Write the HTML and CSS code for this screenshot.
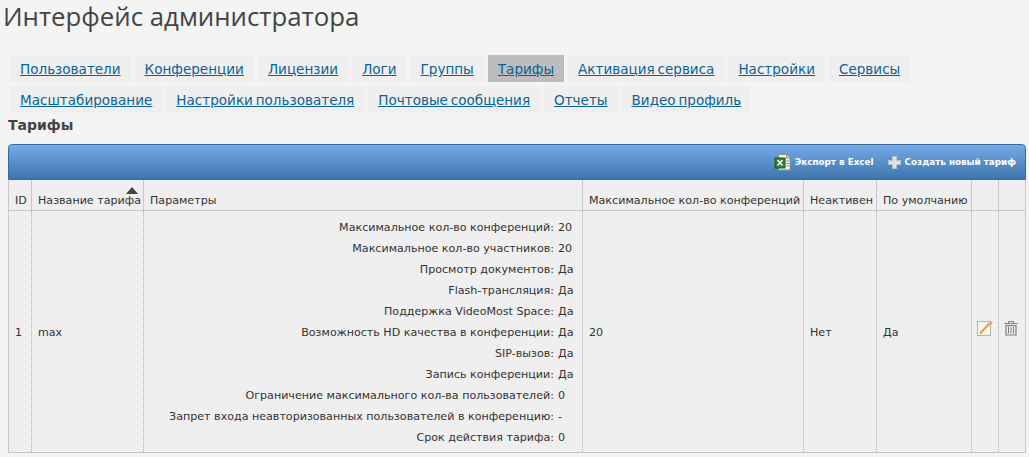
FILE: index.html
```html
<!doctype html>
<html>
    <head>
        <title>Интерфейс администратора</title>
        <link rel="stylesheet" href="styles.css">
    </head>
    <body>
        <h1 class="page-title">Интерфейс администратора</h1>
        <ul class="tabs">
            <li><a href="#">Пользователи</a></li>
            <li><a href="#">Конференции</a></li>
            <li><a href="#">Лицензии</a></li>
            <li><a href="#">Логи</a></li>
            <li><a href="#">Группы</a></li>
            <li class="active"><a href="#">Тарифы</a></li>
            <li><a href="#">Активация сервиса</a></li>
            <li><a href="#">Настройки</a></li>
            <li><a href="#">Сервисы</a></li>
            <li><a href="#">Масштабирование</a></li>
            <li><a href="#">Настройки пользователя</a></li>
            <li><a href="#">Почтовые сообщения</a></li>
            <li><a href="#">Отчеты</a></li>
            <li><a href="#">Видео профиль</a></li>
        </ul>
        <h2 class="section-title">Тарифы</h2>
        <div class="toolbar">
            <a class="tool" href="#">
                <svg width="17" height="17" viewBox="0 0 17 17">
                    <path d="M4.500 .5h8l3.500 3.500v12h-11.500z" fill="#f4f4f0" stroke="#8a8f88"/>
                    <path d="M12.500 .5v3.500h3.500" fill="#d8dcd6" stroke="#8a8f88"/>
                    <rect x="1" y="4" width="10" height="10" fill="#2f7d32" stroke="#1d5a22"/>
                    <path d="M3.500 6l5 5.500M8.500 6l-5 5.500" stroke="#fff" stroke-width="1.500"/>
                    <path d="M12 7h3M12 9.500h3M12 12h3" stroke="#7fa47f"/>
                </svg>
                Экспорт в Excel
            </a>
            <a class="tool" href="#">
                <svg width="13" height="13" viewBox="0 0 13 13">
                    <path d="M4.500 .5h4v4h4v4h-4v4h-4v-4h-4v-4h4z" fill="#dfe3e6" stroke="#b9c3cc"/>
                </svg>
                Создать новый тариф
            </a>
        </div>
        <table class="grid">
            <colgroup>
                <col class="col-id">
                <col class="col-name">
                <col class="col-params">
                <col class="col-max">
                <col class="col-inactive">
                <col class="col-default">
                <col class="col-edit">
                <col class="col-delete">
            </colgroup>
            <thead>
                <tr>
                    <th>ID</th>
                    <th class="sorted">Название тарифа</th>
                    <th>Параметры</th>
                    <th>Максимальное кол-во конференций</th>
                    <th>Неактивен</th>
                    <th>По умолчанию</th>
                    <th></th>
                    <th></th>
                </tr>
            </thead>
            <tbody>
                <tr>
                    <td>1</td>
                    <td>max</td>
                    <td>
                        <dl class="params">
                            <dt>Максимальное кол-во конференций:</dt><dd>20</dd>
                            <dt>Максимальное кол-во участников:</dt><dd>20</dd>
                            <dt>Просмотр документов:</dt><dd>Да</dd>
                            <dt>Flash-трансляция:</dt><dd>Да</dd>
                            <dt>Поддержка VideoMost Space:</dt><dd>Да</dd>
                            <dt>Возможность HD качества в конференции:</dt><dd>Да</dd>
                            <dt>SIP-вызов:</dt><dd>Да</dd>
                            <dt>Запись конференции:</dt><dd>Да</dd>
                            <dt>Ограничение максимального кол-ва пользователей:</dt><dd>0</dd>
                            <dt>Запрет входа неавторизованных пользователей в конференцию:</dt><dd>-</dd>
                            <dt>Срок действия тарифа:</dt><dd>0</dd>
                        </dl>
                    </td>
                    <td>20</td>
                    <td>Нет</td>
                    <td>Да</td>
                    <td class="icon-cell">
                        <svg width="16" height="16" viewBox="0 0 16 16">
                            <rect x=".5" y="1.500" width="13" height="14" fill="#f6f6f2" stroke="#b4b4ac"/>
                            <path d="M3.500 13l9.500-10" stroke="#e8a820" stroke-width="2.200"/>
                            <path d="M3 14l1.500-.5-1-1z" fill="#555"/>
                            <path d="M12.500 3l1.500-1.500 1.500 1.500-1.500 1.500z" fill="#d99a90"/>
                        </svg>
                    </td>
                    <td class="icon-cell">
                        <svg width="14" height="16" viewBox="0 0 14 16" fill="none" stroke="#7d7d7d">
                            <path d="M.5 3.500h13M4.500 3v-1.500h5v1.500"/>
                            <path d="M2 5.500v9.500h10v-9.500z" stroke-width="1.200"/>
                            <path d="M4.500 6.500v7M7 6.500v7M9.500 6.500v7"/>
                        </svg>
                    </td>
                </tr>
            </tbody>
        </table>
    </body>
</html>
```
FILE: styles.css
```css
body {
    background-color: #f4f4f4;
    color: #333;
    font-family: "DejaVu Sans", sans-serif;
    font-size: 11px;
    margin: 0;
    padding: 0 3px 0 8px;
    height: 457px;
    overflow: hidden;
    box-sizing: border-box;
}
a {
    color: #0b6296;
}
.page-title {
    font-family: "Open Sans", sans-serif;
    font-size: 25.800px;
    font-weight: normal;
    line-height: 32px;
    color: #444;
    margin: 0 0 23px -5px;
}
.tabs {
    display: flex;
    flex-wrap: wrap;
    gap: 4px;
    list-style: none;
    margin: 0;
    padding: 0 0 0 2px;
}
.tabs li {
    background-color: #efefef;
    font-size: 13.550px;
    line-height: 26px;
    word-spacing: -1.500px;
    padding: 1px 10px 0;
}
.tabs .active {
    background-color: #bdbdbd;
}
.section-title {
    font-size: 14px;
    line-height: 18px;
    color: #444;
    margin: 3px 0 10px;
}
.toolbar {
    display: flex;
    justify-content: flex-end;
    align-items: center;
    gap: 14px;
    height: 36px;
    padding-right: 9px;
    box-sizing: border-box;
    border: 1px solid #3a6a9c;
    border-radius: 4px 4px 0 0;
    background: linear-gradient(#74aae6, #3f75ae);
}
.tool {
    display: flex;
    align-items: center;
    gap: 4px;
    color: #fff;
    font-size: 8.800px;
    font-weight: bold;
    text-decoration: none;
}
.grid {
    width: 100%;
    table-layout: fixed;
    border-collapse: collapse;
    background-color: #efefef;
    border: 1px solid #c8c8c8;
    border-top: 0;
    font-size: 11.100px;
}
.col-id { width: 23px; }
.col-name { width: 112px; }
.col-params { width: 439px; }
.col-max { width: 221px; }
.col-inactive { width: 73px; }
.col-default { width: 95px; }
.col-edit { width: 27px; }
.grid th {
    height: 30px;
    padding: 0 6px 3px;
    box-sizing: border-box;
    font-weight: normal;
    text-align: left;
    vertical-align: bottom;
    white-space: nowrap;
    border-left: 1px solid #c8c8c8;
    border-bottom: 1px solid #c8c8c8;
}
.grid td {
    padding: 2px 6px 0;
    border-left: 1px dotted #aaa;
}
.grid th:first-child,
.grid td:first-child {
    border-left: 0;
}
.sorted {
    position: relative;
}
.sorted::after {
    content: "";
    position: absolute;
    top: 7px;
    right: 5px;
    border: 6px solid transparent;
    border-top: 0;
    border-bottom: 7px solid #444;
}
.params {
    display: grid;
    grid-template-columns: 1fr 18px;
    column-gap: 4px;
    margin: 4px 0;
}
.params dt {
    text-align: right;
    line-height: 21px;
}
.params dd {
    margin: 0;
    line-height: 21px;
}
.grid .icon-cell {
    padding: 0 0 0 5px;
}
.icon-cell svg {
    display: block;
    margin-bottom: 7px;
}
```
